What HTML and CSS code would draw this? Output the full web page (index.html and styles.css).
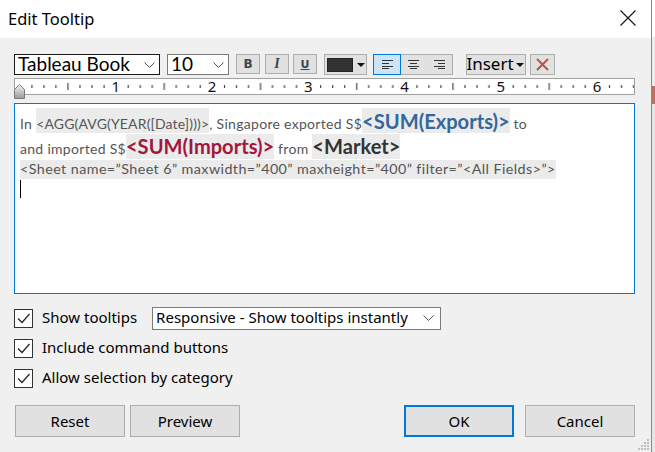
FILE: index.html
```html
<!DOCTYPE html>
<html>
<head>
<meta charset="utf-8">
<link rel="stylesheet" href="styles.css">
</head>
<body>
<div class="dialog">
  <div class="titlebar">
    <span class="title">Edit Tooltip</span>
    <svg class="close" width="16" height="16" viewBox="0 0 16 16"><path d="M0.5 0.5 L15.5 15.5 M15.5 0.5 L0.5 15.5" stroke="#111" stroke-width="1.1" fill="none"/></svg>
  </div>
  <div class="content">
    <div class="toolbar">
      <div class="combo fontsel"><span>Tableau Book</span><svg width="11" height="6" viewBox="0 0 11 6"><path d="M0.5 0.5 L5.5 5.5 L10.5 0.5" stroke="#555" fill="none"/></svg></div>
      <div class="combo sizesel"><span>10</span><svg width="11" height="6" viewBox="0 0 11 6"><path d="M0.5 0.5 L5.5 5.5 L10.5 0.5" stroke="#555" fill="none"/></svg></div>
      <div class="tbtn fmt bold">B</div>
      <div class="tbtn fmt ital">I</div>
      <div class="tbtn fmt und">U</div>
      <div class="tbtn colorbtn"><span class="swatch"></span><span class="tri"></span></div>
      <div class="aligngrp">
        <div class="aseg on"><svg width="11" height="9" viewBox="0 0 11 9"><path d="M0 0.5H11M0 3.5H7M0 6.5H11M0 8.5H7" stroke="#333"/></svg></div>
        <div class="aseg"><svg width="11" height="9" viewBox="0 0 11 9"><path d="M0 0.5H11M2 3.5H9M0 6.5H11M2 8.5H9" stroke="#333"/></svg></div>
        <div class="aseg"><svg width="11" height="9" viewBox="0 0 11 9"><path d="M0 0.5H11M4 3.5H11M0 6.5H11M4 8.5H11" stroke="#333"/></svg></div>
      </div>
      <div class="tbtn insert"><span>Insert</span><span class="tri"></span></div>
      <div class="tbtn clear"><svg width="13" height="13" viewBox="0 0 13 13"><path d="M1 1 L12 12 M12 1 L1 12" stroke="#c0504d" stroke-width="2" fill="none"/></svg></div>
    </div>
    <div class="ruler">
      <svg class="rsvg" width="619" height="15" viewBox="0 0 619 15">
        <defs>
          <pattern id="tk" x="4.5" y="0" width="96.25" height="15" patternUnits="userSpaceOnUse">
            <rect x="12" y="6" width="1" height="3" fill="#222"/>
            <rect x="24" y="6" width="1" height="3" fill="#222"/>
            <rect x="36" y="6" width="1" height="3" fill="#222"/>
            <rect x="48" y="4" width="1" height="7" fill="#222"/>
            <rect x="60" y="6" width="1" height="3" fill="#222"/>
            <rect x="72" y="6" width="1" height="3" fill="#222"/>
            <rect x="84" y="6" width="1" height="3" fill="#222"/>
          </pattern>
        </defs>
        <rect width="619" height="15" fill="url(#tk)"/>
        <g class="rnum" text-anchor="middle">
          <text x="100.75" y="13">1</text>
          <text x="197" y="13">2</text>
          <text x="293.25" y="13">3</text>
          <text x="389.5" y="13">4</text>
          <text x="485.75" y="13">5</text>
          <text x="582" y="13">6</text>
        </g>
      </svg>
      <svg class="indent" width="12" height="15" viewBox="0 0 12 15">
        <defs><linearGradient id="ig" x1="0" y1="0" x2="0" y2="1"><stop offset="0" stop-color="#f4f4f4"/><stop offset="1" stop-color="#9a9a9a"/></linearGradient></defs>
        <path d="M5.5 0.5 L10.5 5.5 L10.5 14.5 L0.5 14.5 L0.5 5.5 Z" fill="url(#ig)" stroke="#7a7a7a"/>
      </svg>
    </div>
    <div class="editor">
      <div class="line l1">
        <span class="t sm">In </span><span class="t sm fld agg">&lt;AGG(AVG(YEAR([Date])))&gt;</span><span class="t sm">, Singapore exported S$</span><span class="t lg fld blue">&lt;SUM(Exports)&gt;</span><span class="t sm"> to</span>
      </div>
      <div class="line l2">
        <span class="t sm">and imported S$</span><span class="t lg fld red">&lt;SUM(Imports)&gt;</span><span class="t sm"> from </span><span class="t lg fld dark">&lt;Market&gt;</span>
      </div>
      <div class="line l3">
        <span class="t sm3 fld">&lt;Sheet name=”Sheet 6” maxwidth=”400” maxheight=”400” filter=”&lt;All Fields&gt;”&gt;</span>
      </div>
      <div class="caret"></div>
    </div>
    <div class="options">
      <div class="opt">
        <span class="cb"><svg width="19" height="19" viewBox="0 0 19 19"><path d="M4 9.5 L8 13.5 L15.5 5" stroke="#222" stroke-width="1.2" fill="none"/></svg></span>
        <span class="lbl">Show tooltips</span>
        <div class="dd"><span>Responsive - Show tooltips instantly</span><svg width="11" height="6" viewBox="0 0 11 6"><path d="M0.5 0.5 L5.5 5.5 L10.5 0.5" stroke="#555" fill="none"/></svg></div>
      </div>
      <div class="opt">
        <span class="cb"><svg width="19" height="19" viewBox="0 0 19 19"><path d="M4 9.5 L8 13.5 L15.5 5" stroke="#222" stroke-width="1.2" fill="none"/></svg></span>
        <span class="lbl">Include command buttons</span>
      </div>
      <div class="opt">
        <span class="cb"><svg width="19" height="19" viewBox="0 0 19 19"><path d="M4 9.5 L8 13.5 L15.5 5" stroke="#222" stroke-width="1.2" fill="none"/></svg></span>
        <span class="lbl">Allow selection by category</span>
      </div>
    </div>
    <div class="buttons">
      <div class="btn">Reset</div>
      <div class="btn">Preview</div>
      <div class="spacer"></div>
      <div class="btn primary">OK</div>
      <div class="btn">Cancel</div>
    </div>
  </div>
  <svg class="grip" width="12" height="12" viewBox="0 0 12 12"><g fill="#bdbdbd"><rect x="9" y="0" width="2" height="2"/><rect x="6" y="3" width="2" height="2"/><rect x="9" y="3" width="2" height="2"/><rect x="3" y="6" width="2" height="2"/><rect x="6" y="6" width="2" height="2"/><rect x="9" y="6" width="2" height="2"/><rect x="0" y="9" width="2" height="2"/><rect x="3" y="9" width="2" height="2"/><rect x="6" y="9" width="2" height="2"/><rect x="9" y="9" width="2" height="2"/></g></svg>
</div>
<div class="edge"></div>
</body>
</html>
```

FILE: styles.css
```css
html, body {
  margin: 0;
  padding: 0;
}
body {
  width: 655px;
  height: 452px;
  display: flex;
  overflow: hidden;
  background: #f0f0f0;
  font-family: "Noto Sans", "Open Sans", sans-serif;
  color: #000;
}
.dialog {
  position: relative;
  width: 651px;
  height: 452px;
  border-right: 1px solid #8a8a8a;
  background: #f0f0f0;
  display: flex;
  flex-direction: column;
}
.edge {
  flex: 1;
  background: linear-gradient(#ffffff 0, #ffffff 37px, #ececec 37px, #ececec 86px, #b9705e 86px, #b9705e 104px, #e6e6e6 104px);
}
.titlebar {
  height: 38px;
  background: #fff;
  display: flex;
  align-items: center;
  justify-content: space-between;
  padding: 0 15px 0 8px;
}
.title {
  font-size: 16.5px;
  position: relative;
  top: -1px;
}
.close {
  display: block;
  margin-top: -3px;
}
.content {
  padding: 16px 0 0 14px;
  display: flex;
  flex-direction: column;
}
.toolbar {
  display: flex;
  height: 21px;
  align-items: stretch;
}
.combo {
  box-sizing: border-box;
  height: 21px;
  background: #fff;
  border: 1px solid #7a7a7a;
  display: flex;
  align-items: center;
  justify-content: space-between;
  padding: 0 4px 0 3px;
  font-family: "Lato", sans-serif;
  font-size: 19px;
}
.combo span {
  position: relative;
  top: -1px;
}
.fontsel {
  width: 146px;
  border-color: #1a1a1a;
}
.sizesel {
  width: 62px;
  margin-left: 7px;
}
.tbtn {
  box-sizing: border-box;
  background: #e1e1e1;
  border: 1px solid #adadad;
  display: flex;
  align-items: center;
  justify-content: center;
}
.fmt {
  width: 24px;
  height: 20px;
  font-family: "DejaVu Sans", sans-serif;
  font-weight: bold;
  font-size: 12px;
  color: #3a4656;
}
.bold { margin-left: 7px; }
.ital { margin-left: 5px; font-style: italic; font-family: "Liberation Serif", serif; font-size: 14px; }
.und { margin-left: 4px; text-decoration: underline; font-size: 11px; }
.colorbtn {
  width: 43px;
  margin-left: 7px;
  justify-content: flex-start;
  padding-left: 2px;
}
.swatch {
  width: 26px;
  height: 14px;
  background: #333;
  border: 1px solid #222;
  box-sizing: border-box;
}
.tri {
  width: 0;
  height: 0;
  border-left: 4px solid transparent;
  border-right: 4px solid transparent;
  border-top: 4px solid #111;
  margin-left: 4px;
}
.aligngrp {
  box-sizing: border-box;
  width: 80px;
  margin-left: 6px;
  display: flex;
  background: #e1e1e1;
  border: 1px solid #adadad;
}
.aseg {
  flex: 1;
  display: flex;
  align-items: center;
  justify-content: center;
}
.aseg.on {
  background: #cce4f7;
  outline: 1px solid #0078d7;
}
.insert {
  width: 60px;
  margin-left: 13px;
  font-size: 17px;
  padding-right: 2px;
}
.insert span:first-child {
  position: relative;
  top: -1px;
}
.insert .tri { margin-left: 2px; }
.clear {
  width: 25px;
  margin-left: 4px;
}
.ruler {
  position: relative;
  margin-top: 3px;
  box-sizing: border-box;
  width: 621px;
  height: 17px;
  background: #fff;
  border: 1px solid #a0a0a0;
}
.rsvg {
  display: block;
  overflow: visible;
}
.rnum {
  font-family: "Noto Sans", sans-serif;
  font-size: 15px;
  fill: #111;
}
.indent {
  position: absolute;
  left: -1px;
  top: 5px;
}
.editor {
  margin-top: 8px;
  box-sizing: border-box;
  width: 621px;
  height: 191px;
  background: #fff;
  border: 1px solid #0078d7;
  padding: 4px 0 0 5px;
}
.line {
  display: flex;
  align-items: flex-start;
  white-space: pre;
  font-family: "Lato", sans-serif;
  color: #555;
}
.l1, .l2 { height: 25px; }
.l2 { margin-top: 0.5px; }
.t {
  box-sizing: border-box;
  height: 25px;
  line-height: normal;
}
.sm {
  font-size: 14px;
  letter-spacing: 0.3px;
  padding-top: 6.7px;
}
.sm.agg { letter-spacing: 0.15px; }
.lg {
  font-size: 20.1px;
  font-weight: bold;
  padding-top: 0.7px;
}
.fld { background: #ebebeb; }
.blue { color: #34679b; }
.red { color: #a1173d; }
.dark { color: #333; }
.l3 { margin-top: 1.5px; height: 19px; }
.sm3 {
  font-size: 14.3px;
  letter-spacing: 0.43px;
  height: 19px;
  padding-top: 0;
  color: #555;
}
.caret {
  width: 1px;
  height: 18px;
  background: #000;
  margin-top: 1px;
}
.options {
  margin-top: 12px;
  display: flex;
  flex-direction: column;
  gap: 6px;
}
.opt {
  height: 24px;
  display: flex;
  align-items: center;
}
.cb {
  box-sizing: border-box;
  width: 19px;
  height: 19px;
  border: 1px solid #333;
  background: #fff;
  display: flex;
  align-items: center;
  justify-content: center;
}
.cb svg { display: block; margin: -1px; }
.lbl {
  font-size: 15px;
  margin-left: 9px;
  position: relative;
  top: -1px;
}
.dd {
  box-sizing: border-box;
  width: 289px;
  height: 23px;
  margin-left: 15px;
  border: 1px solid #7a7a7a;
  background: #fff;
  display: flex;
  align-items: center;
  justify-content: space-between;
  padding: 0 6px 0 3px;
  font-size: 15px;
}
.dd span {
  position: relative;
  top: -1px;
}
.buttons {
  margin-top: 14.5px;
  width: 621px;
  padding-left: 1px;
  box-sizing: border-box;
  display: flex;
}
.spacer { flex: 1; }
.btn {
  box-sizing: border-box;
  width: 110px;
  height: 32px;
  background: #e1e1e1;
  border: 1px solid #adadad;
  display: flex;
  align-items: center;
  justify-content: center;
  font-size: 15px;
}
.btn + .btn { margin-left: 5px; }
.btn.primary + .btn { margin-left: 11px; }
.btn.primary {
  border: 2px solid #0078d7;
}
.grip {
  position: absolute;
  right: 1px;
  bottom: 1px;
}
```
